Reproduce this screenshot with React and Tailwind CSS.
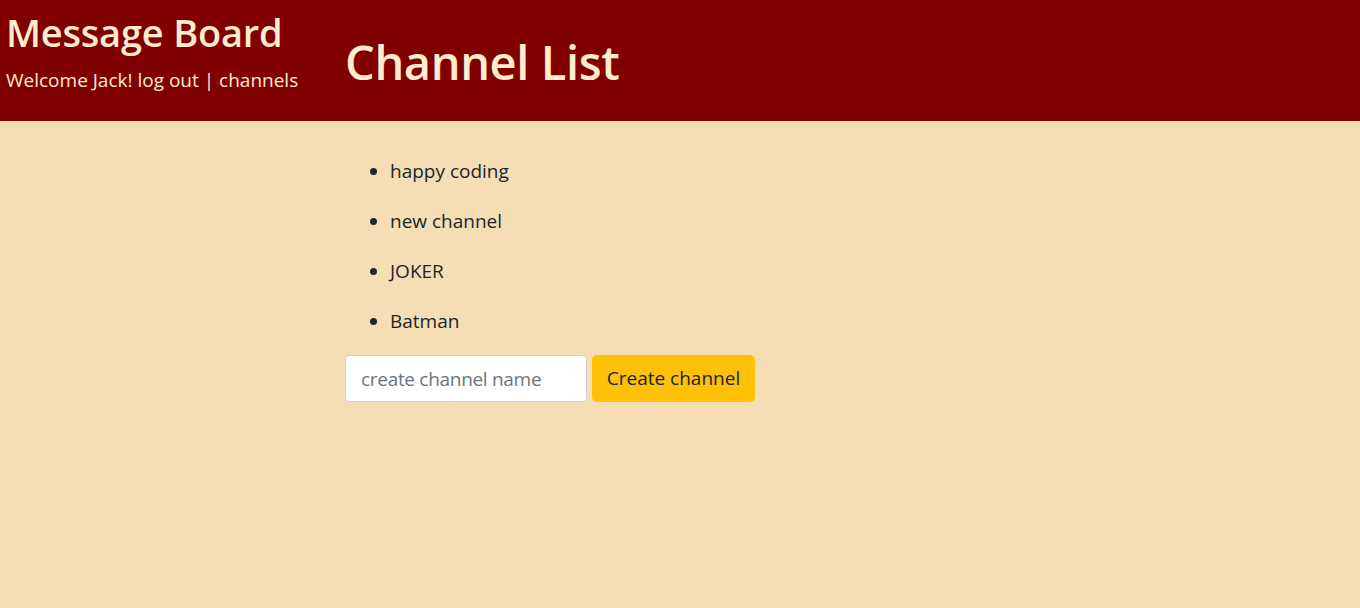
export default function App() {
  const channels = ["happy coding", "new channel", "JOKER", "Batman"];
  return (
    <div className="min-h-[608px] bg-[#f5deb3] font-['Open_Sans',sans-serif] text-[#212529]">
      {/* Header */}
      <header className="flex h-[121px] bg-[#800000] text-[#ffebcd]">
        <div className="w-[340px] pl-[6px] pt-[7px]">
          <h1 className="text-[38px] font-semibold leading-[50px] tracking-[-0.2px]">Message Board</h1>
          <p className="mt-[9px] text-[19px] leading-[28px]">Welcome Jack! log out | channels</p>
        </div>
        <div className="flex items-center pl-[5px] pt-[4px]">
          <h1 className="text-[47px] font-semibold leading-none tracking-[-0.4px]">Channel List</h1>
        </div>
      </header>

      {/* Canales */}
      <main className="pl-[345px]">
        <ul className="mt-[35px] list-disc pl-[45px] text-[19px]">
          {channels.map((c) => (
            <li key={c} className="mb-[20px] leading-[30px]">{c}</li>
          ))}
        </ul>
        <div className="-mt-[1px] flex gap-[5px]">
          <input
            className="h-[47px] w-[242px] rounded-[4px] border border-[#ced4da] bg-white px-[15px] text-[19px] tracking-[-0.3px] placeholder-[#6c757d] outline-none"
            placeholder="create channel name"
          />
          <button className="h-[47px] w-[163px] rounded-[5px] bg-[#ffc107] text-[19px] text-[#212529]">
            Create channel
          </button>
        </div>
      </main>
    </div>
  );
}
